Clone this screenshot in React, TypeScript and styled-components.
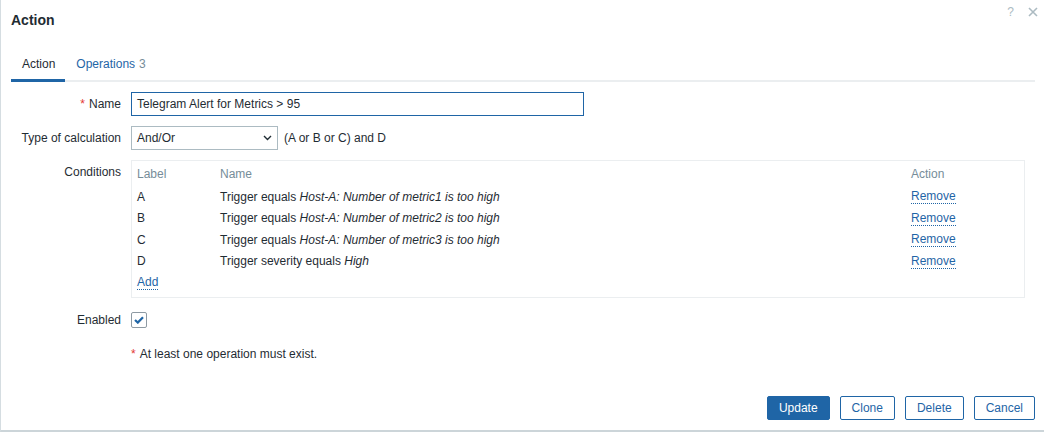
import React from "react";
import styled, { createGlobalStyle } from "styled-components";

const Global = createGlobalStyle`
  html, body { margin: 0; padding: 0; background: #ffffff; }
  body { font-family: "Liberation Sans", Arial, sans-serif; font-size: 12px; color: #1f2c33; }
  * { box-sizing: border-box; }
`;

const Dialog = styled.div`
  width: 1044px;
  height: 432px;
  background: #fff;
  border-left: 1px solid #d5dde1;
  border-bottom: 2px solid #ccd5d9;
  display: flex;
  flex-direction: column;
`;

const Header = styled.div`
  height: 40px;
  padding: 0 6px 0 10px;
  display: flex;
  align-items: center;
  justify-content: space-between;
`;

const Title = styled.h1`
  margin: 0;
  font-size: 14px;
  font-weight: bold;
  color: #1f2c33;
`;

const HeaderControls = styled.div`
  align-self: flex-start;
  padding-top: 5px;
  display: flex;
  gap: 14px;
  align-items: center;
  color: #acbbc2;
`;

const Help = styled.span`
  font-size: 12px;
  line-height: 14px;
`;

const Body = styled.div`
  flex: 1;
  padding-top: 10px;
`;

const TabList = styled.div`
  display: flex;
  margin: 0 9px 0 10px;
  border-bottom: 2px solid #ebeef0;
  height: 32px;
`;

const Tab = styled.div<{ $active?: boolean }>`
  padding: 0 10px 0 11px;
  height: 32px;
  line-height: 29px;
  margin-bottom: -2px;
  border-bottom: 3px solid ${(p) => (p.$active ? "#1f65a6" : "transparent")};
  color: ${(p) => (p.$active ? "#1f2c33" : "#1f65a6")};
`;

const Count = styled.span`
  color: #768d99;
  margin-left: 4px;
`;

const Form = styled.div`
  display: grid;
  grid-template-columns: 111px 1fr;
  column-gap: 10px;
  row-gap: 10px;
  padding: 10px 18px 0 9px;
`;

const Label = styled.div<{ $top?: boolean }>`
  text-align: right;
  line-height: 14px;
  padding-top: ${(p) => (p.$top ? "5px" : "0")};
  align-self: ${(p) => (p.$top ? "start" : "center")};
`;

const Req = styled.span`
  color: #e33734;
  margin-right: 4px;
`;

const Field = styled.div`
  display: flex;
  align-items: center;
  min-height: 24px;
  gap: 6px;
`;

const TextInput = styled.div`
  width: 453px;
  height: 24px;
  border: 1px solid #1f65a6;
  padding: 0 5px;
  line-height: 22px;
  font-size: 12px;
`;

const Select = styled.div`
  width: 147px;
  height: 24px;
  border: 1px solid #acbbc2;
  padding: 0 5px;
  line-height: 22px;
  display: flex;
  align-items: center;
  justify-content: space-between;
`;

const Table = styled.div`
  width: 894px;
  border: 1px solid #ebeef0;
  padding-bottom: 3px;
`;

const Row = styled.div<{ $head?: boolean }>`
  display: grid;
  grid-template-columns: 83px 1fr 113px;
  height: ${(p) => (p.$head ? "25px" : "21.5px")};
  align-items: center;
  padding-left: 5px;
  color: ${(p) => (p.$head ? "#768d99" : "#1f2c33")};
`;

const Cell = styled.div`
  padding-right: 5px;
  white-space: nowrap;
`;

const LinkText = styled.span`
  color: #1f65a6;
  border-bottom: 1px dotted #1f65a6;
  line-height: 13px;
  display: inline-block;
`;

const Checkbox = styled.div`
  width: 16px;
  height: 16px;
  border: 1px solid #8e9aa3;
  border-radius: 2px;
  display: flex;
  align-items: center;
  justify-content: center;
`;

const Footer = styled.div`
  display: flex;
  justify-content: flex-end;
  gap: 10px;
  padding: 0 9px 10px 0;
`;

const Button = styled.button<{ $primary?: boolean }>`
  height: 24px;
  padding: 0 11px;
  font-family: "Liberation Sans", Arial, sans-serif;
  font-size: 12px;
  border-radius: 2px;
  border: 1px solid #1f65a6;
  background: ${(p) => (p.$primary ? "#1f65a6" : "#ffffff")};
  color: ${(p) => (p.$primary ? "#ffffff" : "#1f65a6")};
  cursor: pointer;
`;

const conditions = [
  { l: "A", pre: "Trigger equals ", it: "Host-A: Number of metric1 is too high" },
  { l: "B", pre: "Trigger equals ", it: "Host-A: Number of metric2 is too high" },
  { l: "C", pre: "Trigger equals ", it: "Host-A: Number of metric3 is too high" },
  { l: "D", pre: "Trigger severity equals ", it: "High" },
];

export default function App() {
  return (
    <>
      <Global />
      <Dialog>
        <Header>
          <Title>Action</Title>
          <HeaderControls>
            <Help>?</Help>
            <svg width="10" height="10" viewBox="0 0 10 10">
              <path d="M1 1L9 9M9 1L1 9" stroke="#acbbc2" strokeWidth="1.6" />
            </svg>
          </HeaderControls>
        </Header>
        <Body>
          <TabList>
            <Tab $active>Action</Tab>
            <Tab>
              Operations<Count>3</Count>
            </Tab>
          </TabList>
          <Form>
            <Label>
              <Req>*</Req>Name
            </Label>
            <Field>
              <TextInput>Telegram Alert for Metrics &gt; 95</TextInput>
            </Field>

            <Label>Type of calculation</Label>
            <Field>
              <Select>
                <span>And/Or</span>
                <svg width="9" height="6" viewBox="0 0 9 6">
                  <path d="M1 1L4.5 4.5L8 1" fill="none" stroke="#1f2c33" strokeWidth="1.4" />
                </svg>
              </Select>
              <span>(A or B or C) and D</span>
            </Field>

            <Label $top>Conditions</Label>
            <Table>
              <Row $head>
                <Cell>Label</Cell>
                <Cell>Name</Cell>
                <Cell>Action</Cell>
              </Row>
              {conditions.map((c) => (
                <Row key={c.l}>
                  <Cell>{c.l}</Cell>
                  <Cell>
                    {c.pre}
                    <i>{c.it}</i>
                  </Cell>
                  <Cell>
                    <LinkText>Remove</LinkText>
                  </Cell>
                </Row>
              ))}
              <Row>
                <Cell>
                  <LinkText>Add</LinkText>
                </Cell>
              </Row>
            </Table>

            <Label>Enabled</Label>
            <Field>
              <Checkbox>
                <svg width="10" height="8" viewBox="0 0 10 8">
                  <path d="M1 4L3.8 6.6L9 1.2" fill="none" stroke="#1f65a6" strokeWidth="2.2" />
                </svg>
              </Checkbox>
            </Field>

            <div />
            <Field>
              <span>
                <Req>*</Req>At least one operation must exist.
              </span>
            </Field>
          </Form>
        </Body>
        <Footer>
          <Button $primary>Update</Button>
          <Button>Clone</Button>
          <Button>Delete</Button>
          <Button>Cancel</Button>
        </Footer>
      </Dialog>
    </>
  );
}
